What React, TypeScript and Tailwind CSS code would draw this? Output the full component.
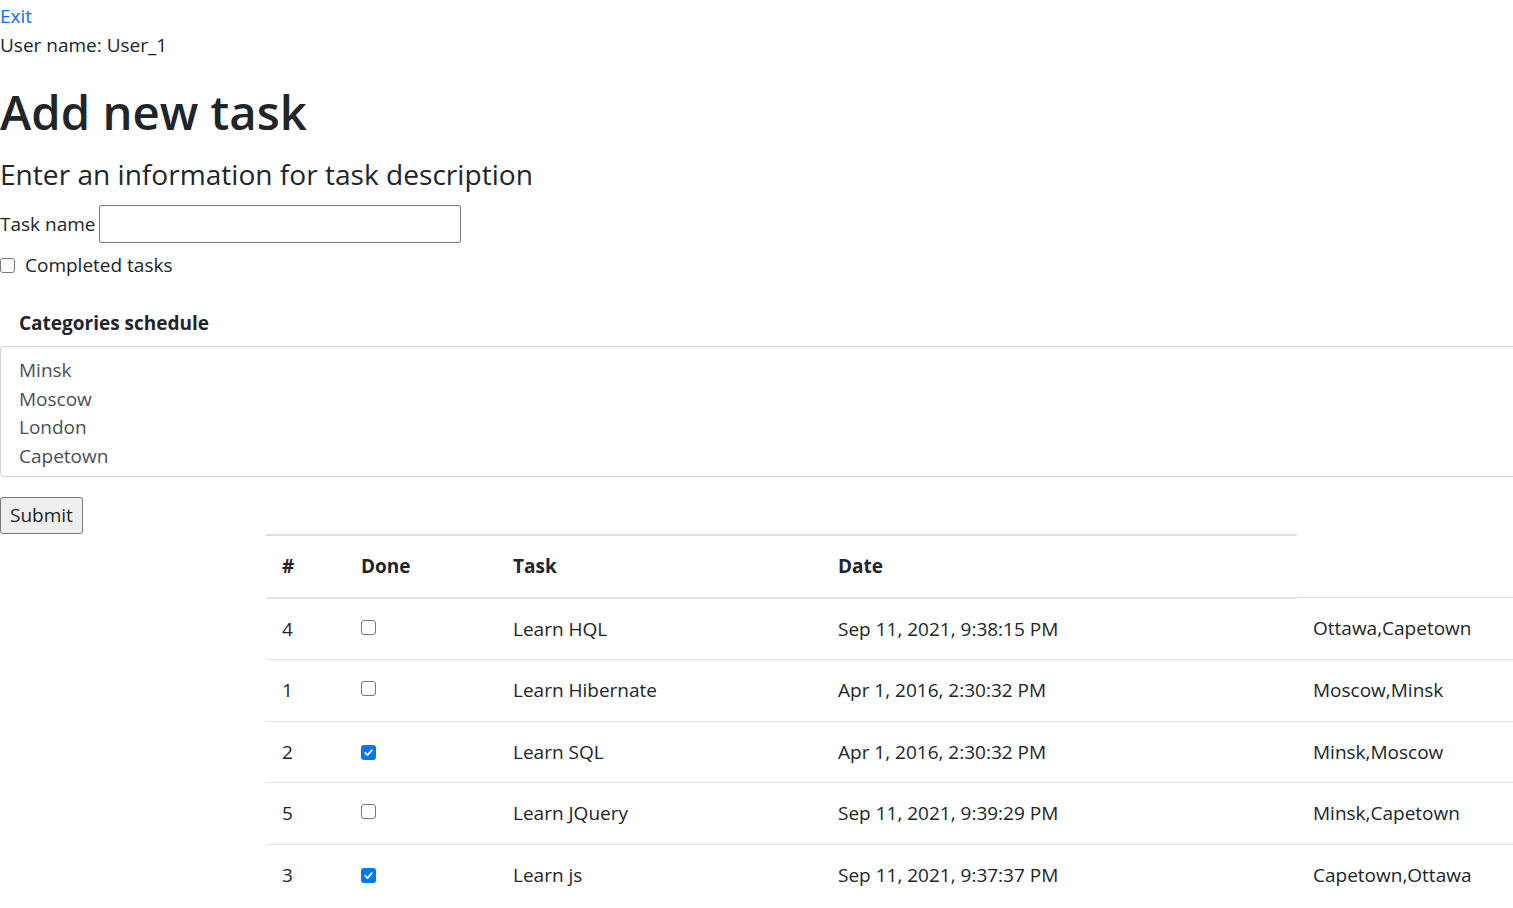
const cities = ["Minsk", "Moscow", "London", "Capetown"];

const tasks = [
  { id: 4, done: false, name: "Learn HQL", date: "Sep 11, 2021, 9:38:15 PM", cats: "Ottawa,Capetown" },
  { id: 1, done: false, name: "Learn Hibernate", date: "Apr 1, 2016, 2:30:32 PM", cats: "Moscow,Minsk" },
  { id: 2, done: true, name: "Learn SQL", date: "Apr 1, 2016, 2:30:32 PM", cats: "Minsk,Moscow" },
  { id: 5, done: false, name: "Learn JQuery", date: "Sep 11, 2021, 9:39:29 PM", cats: "Minsk,Capetown" },
  { id: 3, done: true, name: "Learn js", date: "Sep 11, 2021, 9:37:37 PM", cats: "Capetown,Ottawa" },
];

const Check = ({ checked }: { checked: boolean }) =>
  checked ? (
    <span className="inline-flex w-[15px] h-[15px] rounded-[3px] bg-[#0075ff] items-center justify-center align-[1px]">
      <svg width="11" height="11" viewBox="0 0 12 12" fill="none">
        <path d="M2.5 6.3 L5 8.8 L9.6 3.4" stroke="white" strokeWidth="2" strokeLinecap="round" strokeLinejoin="round" />
      </svg>
    </span>
  ) : (
    <span className="inline-block w-[15px] h-[15px] rounded-[3px] border border-[#767676] bg-white align-[1px]" />
  );

const App = () => {
  return (
    <div
      className="w-[1513px] min-h-[908px] overflow-hidden bg-white text-[#212529] text-[19px]"
      style={{ fontFamily: '"Open Sans", "Noto Sans", sans-serif' }}
    >
      <div className="pt-[2px] leading-[29px]">
        <a href="#" className="block text-[#0d6efd]">
          Exit
        </a>
        <div>User name: User_1</div>
      </div>

      <h1 className="mt-[24px] text-[47.3px] font-semibold leading-[56px]">Add new task</h1>
      <h3 className="mt-[17px] text-[28.1px] leading-[34px]">Enter an information for task description</h3>

      <div className="mt-[14px] flex items-center h-[38px]">
        <label className="mr-[4px] leading-[29px]">Task name</label>
        <input type="text" className="w-[362px] h-[38px] border border-[#767676] rounded-[2px] bg-white" />
      </div>

      <div className="mt-[8px] flex items-center leading-[29px]">
        <Check checked={false} />
        <span className="ml-[10px]">Completed tasks</span>
      </div>

      <div className="mt-[29px] pl-[19px] font-bold leading-[29px]">Categories schedule</div>
      <div className="mt-[8px] w-[1530px] h-[131px] border border-[#ced4da] rounded-[4px] pl-[18px] pt-[9px] text-[#495057] leading-[28.5px]">
        {cities.map((c) => (
          <div key={c}>{c}</div>
        ))}
      </div>

      <button className="mt-[20px] h-[37px] px-[9px] bg-[#efefef] border border-[#767676] rounded-[3px] leading-[29px]">
        Submit
      </button>

      <table className="ml-[266px] border-collapse table-fixed w-[1271px] leading-[28.5px]">
        <colgroup>
          <col className="w-[79px]" />
          <col className="w-[152px]" />
          <col className="w-[325px]" />
          <col className="w-[475px]" />
          <col className="w-[240px]" />
        </colgroup>
        <thead>
          <tr>
            {["#", "Done", "Task", "Date"].map((h) => (
              <th key={h} className="text-left font-bold px-4 py-4 border-t-2 border-b-2 border-[#dee2e6]">
                {h}
              </th>
            ))}
          </tr>
        </thead>
        <tbody>
          {tasks.map((t) => (
            <tr key={t.id}>
              <td className="px-4 py-4 border-t border-[#dee2e6]">{t.id}</td>
              <td className="px-4 py-4 border-t border-[#dee2e6]">
                <Check checked={t.done} />
              </td>
              <td className="px-4 py-4 border-t border-[#dee2e6]">{t.name}</td>
              <td className="px-4 py-4 border-t border-[#dee2e6]">{t.date}</td>
              <td className="px-4 py-4 border-t border-[#dee2e6]">{t.cats}</td>
            </tr>
          ))}
        </tbody>
      </table>
    </div>
  );
};

export default App;
